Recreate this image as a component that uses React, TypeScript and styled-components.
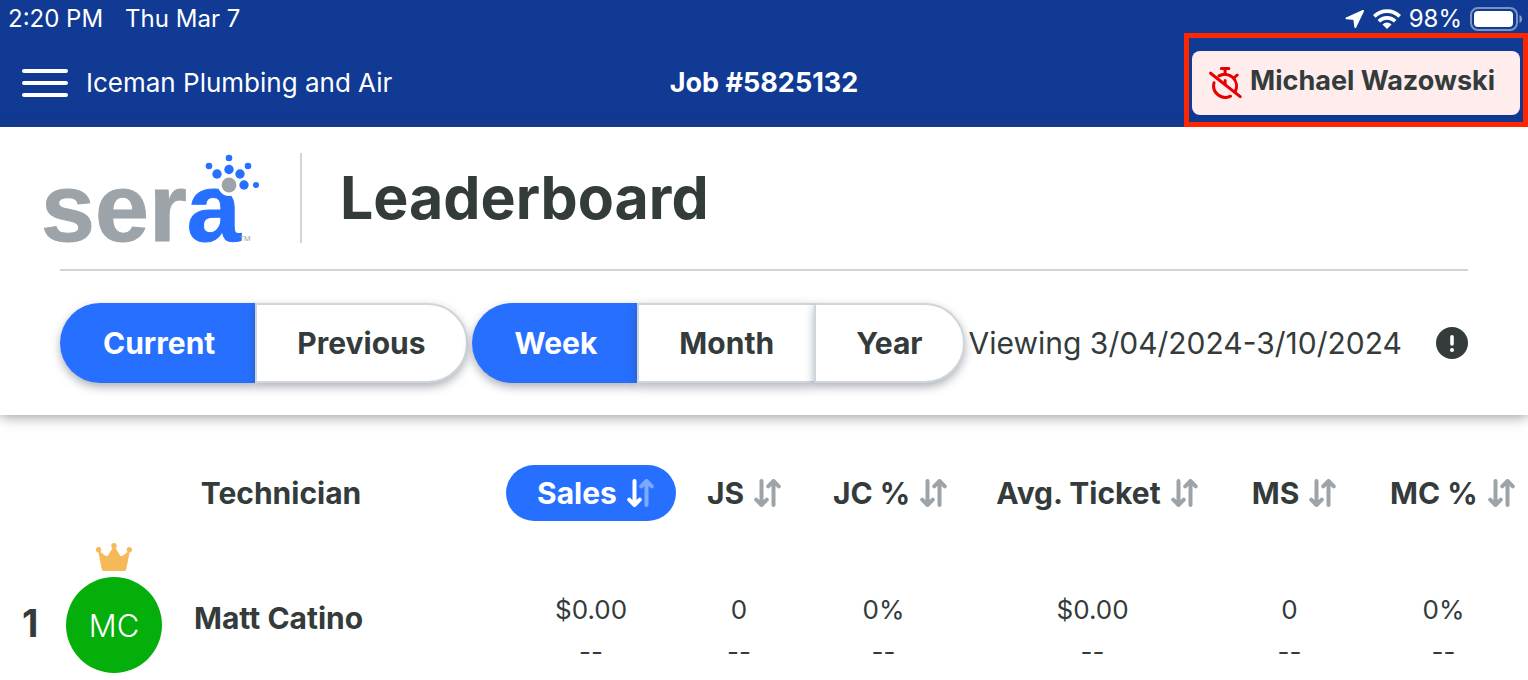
import React, { useState } from "react";
import styled, { createGlobalStyle } from "styled-components";

const color = {
  navy: "#103a93",
  blue: "#2770ff",
  ink: "#343b3b",
  grey: "#9da4a9",
  line: "#cfd6db",
  alert: "#e60000",
  alertBg: "#ffecec",
  frame: "#ff2600",
  green: "#04ae0b",
  gold: "#f5ba57",
};

const GlobalStyle = createGlobalStyle`
  *, *::before, *::after { box-sizing: border-box; }
  body {
    margin: 0;
    background: #fff;
    color: ${color.ink};
    font-family: Inter, "Liberation Sans", sans-serif;
  }
  button { font: inherit; color: inherit; border: 0; background: none; padding: 0; cursor: pointer; }
`;

const TopBar = styled.header`
  background: ${color.navy};
  color: #fff;
`;

const StatusBar = styled.div`
  display: flex;
  justify-content: space-between;
  height: 38px;
  padding: 0 4px 0 8px;
  font-size: 24px;
  line-height: 38px;
`;

const StatusGroup = styled.div<{ $gap: number }>`
  display: flex;
  align-items: center;
  gap: ${(p) => p.$gap}px;
`;

const NavBar = styled.nav`
  display: grid;
  grid-template-columns: 1fr auto 1fr;
  align-items: center;
  height: 89px;
  padding: 0 8px;
  font-size: 27px;
`;

const NavStart = styled.div`
  display: flex;
  align-items: center;
  gap: 18px;
  padding-left: 14px;
`;

const MenuButton = styled.button`
  display: flex;
  flex-direction: column;
  justify-content: space-between;
  width: 46px;
  height: 28px;
`;

const MenuBar = styled.span`
  height: 4px;
  border-radius: 2px;
  background: #fff;
`;

const Company = styled.span`
  font-size: 26px;
  line-height: 36px;
`;

const JobTitle = styled.h2`
  margin: 0;
  font-size: 27px;
  font-weight: 700;
  line-height: 36px;
`;

const UserButton = styled.button`
  position: relative;
  justify-self: end;
  display: flex;
  align-items: center;
  gap: 8px;
  height: 64px;
  padding: 0 25px 0 17px;
  border-radius: 8px;
  background: ${color.alertBg};
  color: ${color.ink};
  font-weight: 700;
  line-height: 36px;
`;

const UserName = styled.span`
  padding-bottom: 3px;
`;

const HighlightFrame = styled.span`
  position: absolute;
  inset: -18px -8px -12px -8px;
  border: 5px solid ${color.frame};
  pointer-events: none;
`;

const Panel = styled.section`
  padding: 26px 60px 32px;
  background: #fff;
  box-shadow: 0 2px 12px rgba(52, 59, 70, 0.5);
`;

const Brand = styled.div`
  display: flex;
  align-items: center;
  height: 90px;
  margin: 0 0 26px -18px;
`;

const Logo = styled.svg`
  flex: none;
  overflow: visible;
`;

const BrandDivider = styled.span`
  width: 2px;
  height: 90px;
  margin: 0 38px 0 40px;
  background: ${color.line};
`;

const PageTitle = styled.h1`
  margin: 0;
  font-size: 59px;
  font-weight: 700;
  line-height: 88px;
`;

const Filters = styled.div`
  display: flex;
  align-items: center;
  gap: 4px;
  padding-top: 32px;
  border-top: 2px solid ${color.line};
`;

const Segments = styled.div`
  display: flex;
  height: 80px;
`;

const Segment = styled.button<{ $active: boolean }>`
  padding: 0 40px;
  border: 2px solid ${(p) => (p.$active ? color.blue : color.line)};
  border-right-width: 0;
  background: ${(p) => (p.$active ? color.blue : "#fff")};
  color: ${(p) => (p.$active ? "#fff" : color.ink)};
  font-size: 30px;
  font-weight: 700;
  box-shadow: 0 4px 10px rgba(52, 59, 80, 0.4);

  &:first-child { border-radius: 40px 0 0 40px; padding-left: 41px; }
  &:last-child { border-radius: 0 40px 40px 0; border-right-width: 2px; }
`;

const Range = styled.span`
  font-size: 30px;
  font-weight: 400;
  line-height: 40px;
  white-space: nowrap;
`;

const InfoButton = styled.button`
  display: flex;
  margin-left: auto;
`;

const Board = styled.table`
  width: 100%;
  margin-top: 50px;
  border-collapse: collapse;
  table-layout: fixed;
`;

const TechHead = styled.th`
  padding: 0 0 0 56px;
  text-align: center;
  font-size: 30px;
  font-weight: 700;
`;

const SortHead = styled.th`
  padding: 0;
  white-space: nowrap;
`;

const SortButton = styled.button<{ $active: boolean }>`
  display: inline-flex;
  align-items: center;
  gap: 10px;
  height: 56px;
  padding: 0 22px 0 31px;
  border-radius: 28px;
  background: ${(p) => (p.$active ? color.blue : "transparent")};
  color: ${(p) => (p.$active ? "#fff" : color.ink)};
  font-size: 30px;
  font-weight: 700;
`;

const TechCell = styled.th`
  padding: 0;
  text-align: left;
  vertical-align: top;
`;

const Tech = styled.div`
  display: flex;
  padding: 22px 0 0 22px;
`;

const Rank = styled.span`
  width: 44px;
  padding-top: 60px;
  font-size: 38px;
  font-weight: 700;
  line-height: 40px;
`;

const AvatarStack = styled.div`
  display: flex;
  flex-direction: column;
  align-items: center;
  gap: 6px;
  margin-right: 32px;
`;

const Avatar = styled.span`
  display: grid;
  place-items: center;
  width: 96px;
  height: 96px;
  border-radius: 50%;
  background: ${color.green};
  color: #fff;
  font-size: 31px;
  font-weight: 300;
`;

const Name = styled.span`
  padding-top: 55px;
  font-size: 30px;
  font-weight: 700;
  line-height: 40px;
`;

const Stat = styled.td`
  padding: 0;
  text-align: center;
  vertical-align: top;
`;

const StatLine = styled.div`
  font-size: 26px;
  font-weight: 400;
  line-height: 42px;

  &:first-child { margin-top: 68px; }
`;

const LocationIcon = () => (
  <svg width="20" height="20" viewBox="0 0 20 20" aria-hidden="true">
    <path d="M18 2 1.500 9.300 9.300 10l1 8Z" fill="#fff" stroke="#fff" strokeWidth="2" strokeLinejoin="round" />
  </svg>
);

const WifiIcon = () => (
  <svg width="28" height="20" viewBox="0 0 28 20" aria-hidden="true">
    <g fill="none" stroke="#fff" strokeWidth="3.600">
      <path d="M1.300 7.400a18 18 0 0 1 25.400 0" />
      <path d="M5.800 12.300a11.600 11.600 0 0 1 16.400 0" />
    </g>
    <path d="M9.500 15.400a6.400 6.400 0 0 1 9 0L14 19.900Z" fill="#fff" />
  </svg>
);

const BatteryIcon = () => (
  <svg width="54" height="24" viewBox="0 0 54 24" aria-hidden="true">
    <rect x="1" y="1" width="46" height="22" rx="7" fill="none" stroke="#fff" strokeOpacity=".45" strokeWidth="2" />
    <rect x="4" y="4" width="39" height="16" rx="4" fill="#fff" />
    <path d="M49.500 8c3.400 1.200 3.400 6.800 0 8Z" fill="#fff" fillOpacity=".5" />
  </svg>
);

const TimerOffIcon = () => (
  <svg width="33" height="32" viewBox="0 0 33 32" fill="none" stroke={color.alert} strokeWidth="3" strokeLinecap="round" aria-hidden="true">
    <path d="M12.300 1.500h7.600M16.100 1.500v5.500" />
    <path d="M10 8.900A11.700 11.700 0 0 1 26.400 24M21.500 29.200A11.700 11.700 0 0 1 5 15.800" />
    <path d="M26 10 28.200 8M16.100 13.500v4" />
    <path d="m1.600 6.200 29.600 23.400" />
  </svg>
);

const AlertIcon = () => (
  <svg width="32" height="32" viewBox="0 0 32 32" aria-hidden="true">
    <circle cx="16" cy="16" r="16" fill={color.ink} />
    <path d="M16 9.800v7.200" stroke="#fff" strokeWidth="3.600" strokeLinecap="round" />
    <circle cx="16" cy="23" r="2" fill="#fff" />
  </svg>
);

const CrownIcon = () => (
  <svg width="36" height="28" viewBox="0 0 36 28" fill={color.gold} aria-hidden="true">
    <path d="M2 7 9 12.400q1.800 1.200 3 0L17 4h2l5 8.400q1.200 1.200 3 0L34 7l-3.700 19q-.3 2-2 2H7.700q-1.700 0-2-2Z" />
    <circle cx="2.600" cy="6.700" r="2.600" />
    <circle cx="18" cy="2.700" r="2.700" />
    <circle cx="33.400" cy="6.700" r="2.600" />
  </svg>
);

const SortIcon = ({ active }: { active: boolean }) => {
  const stroke = active ? "#fff" : color.grey;
  return (
    <svg width="27" height="28" viewBox="0 0 27 28" fill="none" strokeWidth="4" strokeLinecap="round" strokeLinejoin="round" aria-hidden="true">
      <path d="M19.500 26V2M14.200 7.300 19.500 2l5.300 5.300" stroke={stroke} opacity={active ? 0.4 : 1} />
      <path d="M7.500 2v24M2.200 20.700 7.500 26l5.300-5.300" stroke={stroke} />
    </svg>
  );
};

const dots: [number, number, number][] = [
  [187, 5, 3.300], [167, 13, 3.300], [206, 13, 3.300],
  [175, 21, 4.700], [187, 16.500, 4.700], [198, 21, 4.700],
  [202, 32, 4.700], [214, 32, 3],
];

const SeraLogo = () => (
  <Logo width="218" height="90" viewBox="0 0 218 90" role="img" aria-label="sera">
    <text x="-1" y="88" fontFamily="Liberation Sans, sans-serif" fontWeight="700" fontSize="97" fill={color.grey} stroke={color.grey}>
      ser<tspan fill={color.blue} stroke={color.blue}>a</tspan>
    </text>
    <text x="197" y="88" fontFamily="Liberation Sans, sans-serif" fontSize="8" fill={color.grey}>TM</text>
    <circle cx="187" cy="32" r="11" fill="#fff" />
    <circle cx="187" cy="32" r="7.400" fill={color.grey} />
    {dots.map(([cx, cy, r]) => (
      <circle key={`${cx}-${cy}`} cx={cx} cy={cy} r={r} fill={color.blue} />
    ))}
  </Logo>
);

const columns = [
  { label: "Sales", width: 170 },
  { label: "JS", width: 126 },
  { label: "JC %", width: 163 },
  { label: "Avg. Ticket", width: 255 },
  { label: "MS", width: 139 },
  { label: "MC %", width: 169 },
];

const technicians = [
  { name: "Matt Catino", initials: "MC", stats: ["$0.00", "0", "0%", "$0.00", "0", "0%"] },
];

function Toggle({ options, label }: { options: string[]; label: string }) {
  const [selected, setSelected] = useState(options[0]);
  return (
    <Segments role="group" aria-label={label}>
      {options.map((option) => (
        <Segment
          key={option}
          type="button"
          $active={option === selected}
          aria-pressed={option === selected}
          onClick={() => setSelected(option)}
        >
          {option}
        </Segment>
      ))}
    </Segments>
  );
}

export default function App() {
  const [sort, setSort] = useState("Sales");
  return (
    <>
      <GlobalStyle />
      <TopBar>
        <StatusBar>
          <StatusGroup $gap={22}>
            <span>2:20 PM</span>
            <span>Thu Mar 7</span>
          </StatusGroup>
          <StatusGroup $gap={8}>
            <LocationIcon />
            <WifiIcon />
            <span>98%</span>
            <BatteryIcon />
          </StatusGroup>
        </StatusBar>
        <NavBar>
          <NavStart>
            <MenuButton type="button" aria-label="Menu">
              <MenuBar />
              <MenuBar />
              <MenuBar />
            </MenuButton>
            <Company>Iceman Plumbing and Air</Company>
          </NavStart>
          <JobTitle>Job #5825132</JobTitle>
          <UserButton type="button">
            <TimerOffIcon />
            <UserName>Michael Wazowski</UserName>
            <HighlightFrame />
          </UserButton>
        </NavBar>
      </TopBar>

      <Panel>
        <Brand>
          <SeraLogo />
          <BrandDivider />
          <PageTitle>Leaderboard</PageTitle>
        </Brand>
        <Filters>
          <Toggle label="Period" options={["Current", "Previous"]} />
          <Toggle label="Span" options={["Week", "Month", "Year"]} />
          <Range>Viewing 3/04/2024-3/10/2024</Range>
          <InfoButton type="button" aria-label="About this range">
            <AlertIcon />
          </InfoButton>
        </Filters>
      </Panel>

      <Board>
        <colgroup>
          <col style={{ width: 506 }} />
          {columns.map((c) => (
            <col key={c.label} style={{ width: c.width }} />
          ))}
        </colgroup>
        <thead>
          <tr>
            <TechHead scope="col">Technician</TechHead>
            {columns.map((c) => (
              <SortHead key={c.label} scope="col">
                <SortButton type="button" $active={c.label === sort} onClick={() => setSort(c.label)}>
                  {c.label}
                  <SortIcon active={c.label === sort} />
                </SortButton>
              </SortHead>
            ))}
          </tr>
        </thead>
        <tbody>
          {technicians.map((t, i) => (
            <tr key={t.name}>
              <TechCell scope="row">
                <Tech>
                  <Rank>{i + 1}</Rank>
                  <AvatarStack>
                    <CrownIcon />
                    <Avatar>{t.initials}</Avatar>
                  </AvatarStack>
                  <Name>{t.name}</Name>
                </Tech>
              </TechCell>
              {t.stats.map((value, j) => (
                <Stat key={columns[j].label}>
                  <StatLine>{value}</StatLine>
                  <StatLine>--</StatLine>
                </Stat>
              ))}
            </tr>
          ))}
        </tbody>
      </Board>
    </>
  );
}
